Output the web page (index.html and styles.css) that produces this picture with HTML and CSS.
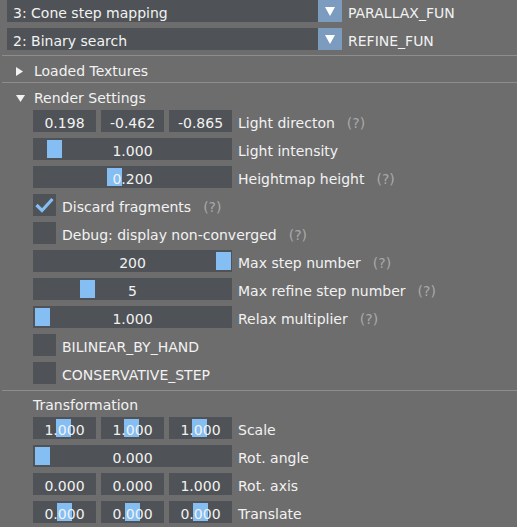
FILE: index.html
```html
<!DOCTYPE html>
<html>
<head>
<meta charset="utf-8">
<link rel="stylesheet" href="styles.css">
</head>
<body>
<div class="win">
  <div class="combo-row first">
    <div class="combo"><span>3: Cone step mapping</span></div>
    <div class="combo-btn"><svg width="10" height="9" viewBox="0 0 10 9"><polygon points="0,0 10,0 5,9" fill="#ffffff"/></svg></div>
    <span class="lbl">PARALLAX_FUN</span>
  </div>
  <div class="combo-row">
    <div class="combo"><span>2: Binary search</span></div>
    <div class="combo-btn"><svg width="10" height="9" viewBox="0 0 10 9"><polygon points="0,0 10,0 5,9" fill="#ffffff"/></svg></div>
    <span class="lbl">REFINE_FUN</span>
  </div>
  <div class="sep sep-top"></div>
  <div class="header"><span class="tri"><svg width="9" height="9" viewBox="0 0 9 9"><polygon points="0,0 7,4.5 0,9" fill="#f2f2f2"/></svg></span>Loaded Textures</div>
  <div class="sep"></div>
  <div class="header"><span class="tri"><svg width="9" height="9" viewBox="0 0 9 9"><polygon points="0,1 9,1 4.5,8" fill="#f2f2f2"/></svg></span>Render Settings</div>

  <div class="section render">
    <div class="row">
      <div class="triple">
        <div class="frame third">0.198</div>
        <div class="frame third">-0.462</div>
        <div class="frame third">-0.865</div>
      </div>
      <span class="lbl">Light directon</span><span class="help">(?)</span>
    </div>
    <div class="row">
      <div class="frame wide"><span class="grab" style="left:14px"></span><span class="val">1.000</span></div>
      <span class="lbl">Light intensity</span>
    </div>
    <div class="row">
      <div class="frame wide"><span class="grab" style="left:74px"></span><span class="val">0.200</span></div>
      <span class="lbl">Heightmap height</span><span class="help">(?)</span>
    </div>
    <div class="row">
      <div class="check"><svg width="23" height="22" viewBox="0 0 23 22"><polyline points="3.5,11 9,16.5 19.5,5" fill="none" stroke="#84bef2" stroke-width="3.2" stroke-linecap="butt" stroke-linejoin="miter"/></svg></div>
      <span class="lbl">Discard fragments</span><span class="help">(?)</span>
    </div>
    <div class="row">
      <div class="check"></div>
      <span class="lbl">Debug: display non-converged</span><span class="help">(?)</span>
    </div>
    <div class="row">
      <div class="frame wide"><span class="grab" style="left:183px"></span><span class="val">200</span></div>
      <span class="lbl">Max step number</span><span class="help">(?)</span>
    </div>
    <div class="row">
      <div class="frame wide"><span class="grab" style="left:47px"></span><span class="val">5</span></div>
      <span class="lbl">Max refine step number</span><span class="help">(?)</span>
    </div>
    <div class="row">
      <div class="frame wide"><span class="grab" style="left:2px"></span><span class="val">1.000</span></div>
      <span class="lbl">Relax multiplier</span><span class="help">(?)</span>
    </div>
    <div class="row">
      <div class="check"></div>
      <span class="lbl">BILINEAR_BY_HAND</span>
    </div>
    <div class="row">
      <div class="check"></div>
      <span class="lbl">CONSERVATIVE_STEP</span>
    </div>
  </div>

  <div class="sep sep-mid"></div>

  <div class="section transform">
    <div class="title">Transformation</div>
    <div class="rows">
      <div class="row">
        <div class="triple">
          <div class="frame third"><span class="grab" style="left:23px"></span><span class="val">1.000</span></div>
          <div class="frame third"><span class="grab" style="left:23px"></span><span class="val">1.000</span></div>
          <div class="frame third"><span class="grab" style="left:23px"></span><span class="val">1.000</span></div>
        </div>
        <span class="lbl">Scale</span>
      </div>
      <div class="row">
        <div class="frame wide"><span class="grab" style="left:2px"></span><span class="val">0.000</span></div>
        <span class="lbl">Rot. angle</span>
      </div>
      <div class="row">
        <div class="triple">
          <div class="frame third">0.000</div>
          <div class="frame third">0.000</div>
          <div class="frame third">1.000</div>
        </div>
        <span class="lbl">Rot. axis</span>
      </div>
      <div class="row">
        <div class="triple">
          <div class="frame third"><span class="grab" style="left:24px"></span><span class="val">0.000</span></div>
          <div class="frame third"><span class="grab" style="left:24px"></span><span class="val">0.000</span></div>
          <div class="frame third"><span class="grab" style="left:24px"></span><span class="val">0.000</span></div>
        </div>
        <span class="lbl">Translate</span>
      </div>
    </div>
  </div>
</div>
</body>
</html>
```

FILE: styles.css
```css
html, body {
  margin: 0;
  padding: 0;
  background: #6d6d6d;
}
body {
  width: 517px;
  height: 527px;
  overflow: hidden;
  font-family: "DejaVu Sans", sans-serif;
  font-size: 14px;
  color: #f2f2f2;
}
.win {
  display: flex;
  flex-direction: column;
}
.combo-row {
  display: flex;
  align-items: center;
  height: 22px;
  margin-left: 7px;
  margin-top: 6px;
}
.combo-row.first {
  margin-top: 0;
}
.combo {
  width: 311px;
  height: 22px;
  background: #4f5256;
  display: flex;
  align-items: center;
  padding-left: 6px;
  padding-top: 4px;
  box-sizing: border-box;
  line-height: 22px;
}
.combo-btn {
  width: 24px;
  height: 22px;
  background: #7b9bbf;
  display: flex;
  align-items: center;
  justify-content: center;
}
.combo-btn svg {
  display: block;
  margin-top: 1px;
}
.lbl {
  margin-left: 6px;
  padding-top: 4px;
  line-height: 22px;
  white-space: nowrap;
}
.help {
  margin-left: 12px;
  padding-top: 4px;
  color: #a9a9a9;
  line-height: 22px;
  white-space: nowrap;
}
.sep {
  height: 1px;
  background: #8d8d8d;
  margin-left: 2px;
}
.sep-top {
  margin-top: 5px;
}
.header {
  display: flex;
  align-items: center;
  height: 22px;
  box-sizing: border-box;
  margin-top: 4px;
  padding-left: 16px;
  line-height: 22px;
}
.tri {
  width: 18px;
  display: flex;
  align-items: center;
}
.tri svg {
  display: block;
}
.section {
  padding-left: 33px;
  display: flex;
  flex-direction: column;
}
.render {
  margin-top: 1px;
  gap: 6px;
}
.row {
  display: flex;
  align-items: center;
  height: 22px;
}
.triple {
  display: flex;
  gap: 5px;
}
.frame {
  position: relative;
  height: 22px;
  box-sizing: border-box;
  padding-top: 4px;
  background: #4f5256;
  display: flex;
  align-items: center;
  justify-content: center;
  line-height: 22px;
  white-space: nowrap;
}
.third {
  width: 63px;
}
.wide {
  width: 199px;
}
.grab {
  position: absolute;
  top: 2px;
  width: 15px;
  height: 18px;
  background: #84bef2;
}
.val {
  position: relative;
}
.check {
  width: 23px;
  height: 22px;
  background: #4f5256;
}
.check svg {
  display: block;
}
.sep-mid {
  margin-top: 6px;
}
.transform {
  margin-top: 4px;
}
.title {
  height: 20px;
  line-height: 20px;
}
.rows {
  margin-top: 2px;
  display: flex;
  flex-direction: column;
  gap: 6px;
}
```
